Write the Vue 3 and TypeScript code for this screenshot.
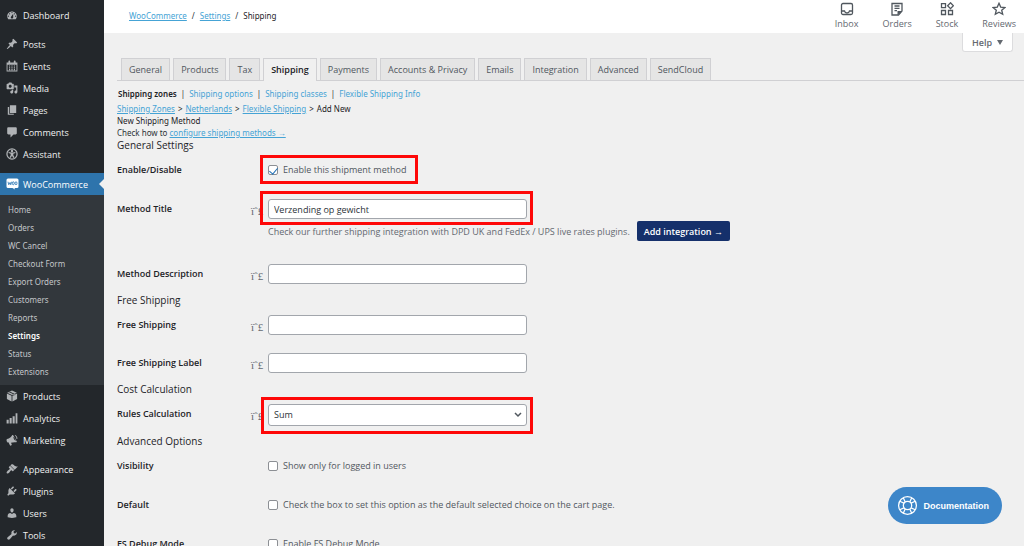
<script setup lang="ts">
import { ref } from 'vue'

interface MenuItem {
  label: string
  icon: string
  gap?: 'small' | 'large'
  current?: boolean
}

const icons: Record<string, string> = {
  dashboard:
    'M3.76 17h12.48c1.1-1.37 1.76-3.11 1.76-5 0-4.42-3.58-8-8-8s-8 3.58-8 8c0 1.89.66 3.63 1.76 5zM10 5c.55 0 1 .45 1 1s-.45 1-1 1-1-.45-1-1 .45-1 1-1zM6 7c.55 0 1 .45 1 1s-.45 1-1 1-1-.45-1-1 .45-1 1-1zm8 0c.55 0 1 .45 1 1s-.45 1-1 1-1-.45-1-1 .45-1 1-1zm-5.37 5.55L12 8v6c0 1.1-.9 2-2 2s-2-.9-2-2c0-.57.24-1.08.63-1.45zM4 11c.55 0 1 .45 1 1s-.45 1-1 1-1-.45-1-1 .45-1 1-1zm12 0c.55 0 1 .45 1 1s-.45 1-1 1-1-.45-1-1 .45-1 1-1z',
  pin: 'M10.44 3.02l1.82-1.82 6.36 6.35-1.83 1.82c-1.05-.68-2.48-.57-3.41.36l-.75.75c-.92.93-1.04 2.35-.35 3.41l-1.83 1.82-2.41-2.41-2.8 2.79c-.42.42-3.38 2.71-3.8 2.29s1.86-3.39 2.28-3.81l2.79-2.79L4.1 9.36l1.83-1.82c1.05.69 2.48.57 3.4-.36l.75-.75c.93-.92 1.05-2.35.36-3.41z',
  calendar:
    'M1 4h3V2.500a1.500 1.500 0 0 1 3 0V4h6V2.500a1.500 1.500 0 0 1 3 0V4h3v15H1zM2.500 8v9.500h15V8zM5 9h2v2H5zm4 0h2v2H9zm4 0h2v2h-2zM5 12h2v2H5zm4 0h2v2H9zm4 0h2v2h-2zM5 15h2v2H5zm4 0h2v2H9zm4 0h2v2h-2z',
  media:
    'M13 11V4c0-.55-.45-1-1-1h-1.67L9 1H5L3.67 3H2c-.55 0-1 .45-1 1v7c0 .55.45 1 1 1h10c.55 0 1-.45 1-1zM7 4.500c1.380 0 2.500 1.120 2.500 2.500S8.380 9.500 7 9.500 4.500 8.380 4.500 7 5.620 4.500 7 4.500zM14 6h5v10.500c0 1.380-1.120 2.500-2.500 2.500S14 17.880 14 16.500s1.120-2.500 2.500-2.500c.17 0 .34.02.5.05V9h-3V6zm-4 8.050V13h2v3.500c0 1.380-1.120 2.500-2.500 2.500S7 17.880 7 16.500 8.120 14 9.500 14c.17 0 .34.02.5.05z',
  pages: 'M6.500 15V2H17v13zM5.300 16.200H13V18H3V5h2.300z',
  comment: 'M4 2h12c1.100 0 2 .9 2 2v8c0 1.100-.9 2-2 2h-3.500l-5 5v-5H4c-1.100 0-2-.9-2-2V4c0-1.100.9-2 2-2z',
  access:
    'M10 .5a9.500 9.500 0 1 0 0 19A9.500 9.500 0 0 0 10 .5zm0 2.100a7.400 7.400 0 1 1 0 14.800 7.400 7.400 0 0 1 0-14.800zM10 3a2 2 0 1 0 0 4 2 2 0 0 0 0-4zM4.500 6.500l-.3 2 3.600 1v2.500L5.900 15.600l2 1L10 13l2.100 3.600 2-1L12.200 12V9.500l3.600-1-.3-2-4 1h-3z',
  box: 'M10 1l8 3.500-8 3.800-8-3.800zM1.500 6l7.800 3.700V19L1.500 15zM18.500 6l-7.800 3.700V19l7.800-4zM6 2.500l8 3.800v2.500l-1.500.7V7L4.500 3.300z',
  chart: 'M1 13h3.500v6H1zM6 10h3.500v9H6zM11 7h3.500v12H11zM16 2h3v17h-3z',
  megaphone:
    'M1.500 8.500C4 8 8 6 10 2.500c.6-.8 1.600-1 2.200-.2l5.600 9.600c.4 1-.1 1.900-1.200 1.900-3.600-.2-6.400.1-8.200.9l1.400 3.600-2.800 1.200L4 13.800l-1.500.2C.8 12.500.5 10 1.500 8.500zM12 4.500a12 12 0 0 0 4 7.500c0-3-1.500-6-4-7.500zM15 1.500c3 1 4.500 4 3.800 7l-1.300-.3c.3-2.400-.7-4.400-2.800-5.400z',
  brush:
    'M14.480 11.060L7.410 3.990l1.500-1.500c.5-.56 2.300-.47 3.510.32 1.210.8 1.430 1.280 2.910 2.100 1.180.64 2.450 1.260 4.450.85zm-.71.71L6.700 4.700 4.930 6.470c-.39.39-.39 1.020 0 1.410l1.060 1.060c.39.39.39 1.030 0 1.420-.6.6-1.430 1.110-2.210 1.690-.35.26-.7.53-1.010.84C1.430 14.230.4 16.080 1.400 17.070c.99 1 2.840-.03 4.180-1.360.31-.31.58-.66.85-1.020.57-.78 1.080-1.610 1.690-2.210.39-.39 1.020-.39 1.410 0l1.060 1.060c.39.39 1.020.39 1.410 0z',
  plug: 'M13.110 4.360L9.870 7.600 8 5.730l3.240-3.240c.35-.34 1.050-.2 1.560.32.52.51.66 1.210.31 1.550zm-8 1.770l.91-1.120 9.010 9.010-1.190.84c-.71.71-2.630 1.160-3.820 1.160H6.140L4.900 17.260c-.59.59-1.540.59-2.120 0-.59-.58-.59-1.530 0-2.120l1.240-1.240v-3.880c0-1.130.4-3.190 1.090-3.890zm7.260 3.970l3.240-3.240c.34-.35 1.040-.21 1.550.31.52.51.66 1.210.31 1.550l-3.240 3.250z',
  user: 'M10 9.250c-2.270 0-2.730-3.440-2.730-3.440C7 4.020 7.820 2 9.970 2c2.160 0 2.980 2.020 2.710 3.810 0 0-.41 3.440-2.680 3.440zm0 2.570L12.720 10c2.390 0 4.520 2.330 4.520 4.530v2.490s-3.650 1.130-7.240 1.130c-3.650 0-7.240-1.130-7.240-1.130v-2.490c0-2.250 1.940-4.480 4.470-4.480z',
  wrench:
    'M16.680 9.770c-1.340 1.340-3.300 1.670-4.950.99l-5.410 6.520c-.99.99-2.590.99-3.580 0s-.99-2.590 0-3.570l6.520-5.420c-.68-1.650-.35-3.610.99-4.950 1.280-1.280 3.120-1.620 4.720-1.060l-2.890 2.890 2.820 2.820 2.860-2.870c.53 1.580.18 3.390-1.080 4.650z',
}

const mainMenu: MenuItem[] = [
  { label: 'Dashboard', icon: 'dashboard' },
  { label: 'Posts', icon: 'pin', gap: 'small' },
  { label: 'Events', icon: 'calendar' },
  { label: 'Media', icon: 'media' },
  { label: 'Pages', icon: 'pages' },
  { label: 'Comments', icon: 'comment' },
  { label: 'Assistant', icon: 'access' },
  { label: 'WooCommerce', icon: 'woo', gap: 'large', current: true },
]
const subMenu = ['Home', 'Orders', 'WC Cancel', 'Checkout Form', 'Export Orders', 'Customers', 'Reports', 'Settings', 'Status', 'Extensions']
const lowerMenu: MenuItem[] = [
  { label: 'Products', icon: 'box' },
  { label: 'Analytics', icon: 'chart' },
  { label: 'Marketing', icon: 'megaphone' },
  { label: 'Appearance', icon: 'brush', gap: 'small' },
  { label: 'Plugins', icon: 'plug' },
  { label: 'Users', icon: 'user' },
  { label: 'Tools', icon: 'wrench' },
]

const tabs = ['General', 'Products', 'Tax', 'Shipping', 'Payments', 'Accounts & Privacy', 'Emails', 'Integration', 'Advanced', 'SendCloud']
const sections = ['Shipping zones', 'Shipping options', 'Shipping classes', 'Flexible Shipping Info']
const tipGlyph = 'ïˆ£'

const enabled = ref(true)
const title = ref('Verzending op gewicht')
const description = ref('')
const freeShipping = ref('')
const freeLabel = ref('')
const rules = ref('Sum')
const visibility = ref(false)
const isDefault = ref(false)
const debug = ref(false)
</script>

<template>
  <div class="admin">
    <nav class="sidebar" aria-label="Main menu">
      <a v-for="item in mainMenu" :key="item.label" href="#" class="item" :class="[item.gap, { current: item.current }]">
        <svg v-if="item.icon === 'woo'" class="woo" viewBox="0 0 26 24" aria-hidden="true">
          <path fill="#fff" d="M4 1h18q3 0 3 3v13q0 3-3 3h-5l1 3-5-3H4q-3 0-3-3V4q0-3 3-3z" />
          <path fill="none" stroke="#2271b1" stroke-width="1.600" d="M4 7.500l1.500 6L8 9l1.500 4.500L11 7.500" />
          <ellipse cx="14.500" cy="10.500" rx="2" ry="3" fill="none" stroke="#2271b1" stroke-width="1.600" />
          <ellipse cx="20" cy="10.500" rx="2" ry="3" fill="none" stroke="#2271b1" stroke-width="1.600" />
        </svg>
        <svg v-else class="icon" viewBox="0 0 20 20" aria-hidden="true"><path fill-rule="evenodd" :d="icons[item.icon]" /></svg>
        <span>{{ item.label }}</span>
      </a>
      <div class="submenu">
        <a v-for="name in subMenu" :key="name" href="#" :class="{ active: name === 'Settings' }">{{ name }}</a>
      </div>
      <a v-for="item in lowerMenu" :key="item.label" href="#" class="item" :class="item.gap">
        <svg class="icon" viewBox="0 0 20 20" aria-hidden="true"><path fill-rule="evenodd" :d="icons[item.icon]" /></svg>
        <span>{{ item.label }}</span>
      </a>
    </nav>

    <div class="page">
      <header class="topbar">
        <div class="crumbs">
          <a href="#">WooCommerce</a><span>/</span><a href="#">Settings</a><span>/</span><b>Shipping</b>
        </div>
        <div class="activity">
          <button type="button">
            <svg viewBox="0 0 14 14" aria-hidden="true"><rect x="1.500" y="1.500" width="11" height="11" rx="1.500" /><path d="M1.500 9h3q.5 2 2.500 2t2.500-2h3" /></svg>
            Inbox
          </button>
          <button type="button">
            <svg viewBox="0 0 14 14" aria-hidden="true"><path d="M2 1.500h10v7.500l-3.500 4H2zM4.500 4h5M4.500 6.300h5M4.500 8.600h2.500" /><path class="solid" d="M7.500 13V9H12z" /></svg>
            Orders
          </button>
          <button type="button">
            <svg viewBox="0 0 14 14" aria-hidden="true"><path d="M1.500 1.700h4v4h-4zM1.500 8.500h4v4h-4zM8.500 8.500h4v4h-4zM10.500.8l2.900 2.900-2.900 2.900-2.900-2.900z" /></svg>
            Stock
          </button>
          <button type="button">
            <svg viewBox="0 0 14 14" aria-hidden="true"><path d="M7 1.300l1.700 3.800 4.200.4-3.200 2.700 1 4.100L7 10.200l-3.700 2.100 1-4.100L1.100 5.500l4.200-.4z" /></svg>
            Reviews
          </button>
        </div>
      </header>

      <div class="meta">
        <button type="button" class="help">Help <svg viewBox="0 0 6 5" aria-hidden="true"><path d="M0 0h6L3 5z" /></svg></button>
      </div>

      <main class="content">
        <nav class="tabs" aria-label="Settings tabs">
          <a v-for="tab in tabs" :key="tab" href="#" :class="{ active: tab === 'Shipping' }">{{ tab }}</a>
        </nav>

        <nav class="sections" aria-label="Shipping sections">
          <template v-for="(name, i) in sections" :key="name">
            <span v-if="i > 0">|</span><a href="#" :class="{ active: i === 0 }">{{ name }}</a>
          </template>
        </nav>

        <div class="trail">
          <a href="#">Shipping Zones</a><span>&gt;</span><a href="#">Netherlands</a><span>&gt;</span><a href="#">Flexible Shipping</a><span>&gt;</span><span>Add New</span>
        </div>
        <h1>New Shipping Method</h1>
        <p class="hint">Check how to <a href="#">configure shipping methods →</a></p>

        <form @submit.prevent>
          <h2>General Settings</h2>
          <div class="row">
            <label class="name" for="enabled">Enable/Disable</label>
            <div class="field">
              <label class="check marked"><input id="enabled" v-model="enabled" type="checkbox" />Enable this shipment method</label>
            </div>
          </div>
          <div class="row text">
            <label class="name" for="title">Method Title</label>
            <span class="tip">{{ tipGlyph }}</span>
            <div class="field">
              <div class="marked box"><input id="title" v-model="title" type="text" /></div>
              <p class="note">Check our further shipping integration with DPD UK and FedEx / UPS live rates plugins. <button type="button">Add integration →</button></p>
            </div>
          </div>
          <div class="row text">
            <label class="name" for="description">Method Description</label>
            <span class="tip">{{ tipGlyph }}</span>
            <div class="field"><div class="box"><input id="description" v-model="description" type="text" /></div></div>
          </div>

          <h2>Free Shipping</h2>
          <div class="row text">
            <label class="name" for="free">Free Shipping</label>
            <span class="tip">{{ tipGlyph }}</span>
            <div class="field"><div class="box"><input id="free" v-model="freeShipping" type="text" /></div></div>
          </div>
          <div class="row text">
            <label class="name" for="free-label">Free Shipping Label</label>
            <span class="tip">{{ tipGlyph }}</span>
            <div class="field"><div class="box"><input id="free-label" v-model="freeLabel" type="text" /></div></div>
          </div>

          <h2>Cost Calculation</h2>
          <div class="row">
            <label class="name" for="rules">Rules Calculation</label>
            <span class="tip">{{ tipGlyph }}</span>
            <div class="field">
              <div class="marked box dropdown">
                <select id="rules" v-model="rules"><option>Sum</option></select>
                <svg class="chevron" viewBox="0 0 8 6" aria-hidden="true"><path d="M1 1l3 3 3-3" /></svg>
              </div>
            </div>
          </div>

          <h2>Advanced Options</h2>
          <div class="row">
            <label class="name" for="visibility">Visibility</label>
            <div class="field"><label class="check"><input id="visibility" v-model="visibility" type="checkbox" />Show only for logged in users</label></div>
          </div>
          <div class="row">
            <label class="name" for="default">Default</label>
            <div class="field"><label class="check"><input id="default" v-model="isDefault" type="checkbox" />Check the box to set this option as the default selected choice on the cart page.</label></div>
          </div>
          <div class="row">
            <label class="name" for="debug">FS Debug Mode</label>
            <div class="field"><label class="check"><input id="debug" v-model="debug" type="checkbox" />Enable FS Debug Mode</label></div>
          </div>
        </form>
      </main>
    </div>

    <button type="button" class="docs">
      <svg viewBox="0 0 20 20" aria-hidden="true">
        <circle cx="10" cy="10" r="8.500" />
        <circle cx="10" cy="10" r="4" />
        <path d="M2.600 6l4 1.800M6 2.600l1.800 4M14 2.600l-1.800 4M17.400 6l-4 1.800M17.400 14l-4-1.800M14 17.400l-1.800-4M6 17.400l1.800-4M2.600 14l4-1.800" />
      </svg>
      Documentation
    </button>
  </div>
</template>

<style>
body {
  margin: 0;
  background: #f0f0f0;
}
</style>

<style scoped>
.admin {
  display: flex;
  height: 100vh;
  overflow: hidden;
  font-family: 'Open Sans', 'Noto Sans', sans-serif;
  font-size: 9px;
  line-height: 13px;
  color: #2c3338;
  background: #f0f0f0;
}
.admin * {
  box-sizing: border-box;
}
button,
input,
select {
  font: inherit;
  color: inherit;
  margin: 0;
}
a {
  color: #45a3d5;
}

.sidebar {
  flex: none;
  width: 104px;
  padding-top: 4px;
  background: #23272b;
}
.item {
  position: relative;
  display: flex;
  align-items: center;
  gap: 5px;
  height: 22px;
  padding-left: 6px;
  color: #f0f0f1;
  font-weight: 500;
  text-decoration: none;
}
.item.small {
  margin-top: 7px;
}
.item.large {
  margin-top: 8px;
}
.item.current {
  background: #2e74ac;
  color: #fff;
}
.item.current::after {
  content: '';
  position: absolute;
  right: 0;
  top: 6px;
  border: 5px solid transparent;
  border-left-width: 0;
  border-right-color: #f0f0f0;
}
.icon {
  width: 12px;
  height: 12px;
  fill: #b0b3b6;
}
.woo {
  width: 13px;
  height: 12px;
  margin-right: -1px;
}
.submenu {
  display: flex;
  flex-direction: column;
  padding: 6px 0 4px;
  background: #32373c;
}
.submenu a {
  height: 18px;
  padding-left: 8px;
  font: 8px/18px 'Noto Sans', sans-serif;
  color: #c3c6c9;
  text-decoration: none;
}
.submenu a.active {
  color: #fff;
  font-weight: 600;
}

.page {
  flex: 1;
  min-width: 0;
}
.topbar {
  display: flex;
  justify-content: space-between;
  height: 33px;
  padding: 0 8px 0 25px;
  background: #fff;
}
.crumbs {
  display: flex;
  align-items: center;
  gap: 5px;
  padding-bottom: 2px;
  font-family: 'Noto Sans', sans-serif;
  font-size: 8px;
}
.crumbs b {
  font-weight: 400;
  color: #1d2327;
}
.activity {
  display: flex;
  gap: 24px;
}
.activity button {
  display: flex;
  flex-direction: column;
  align-items: center;
  gap: 1px;
  padding: 2px 0 0;
  border: 0;
  background: none;
  color: #646970;
}
.activity svg {
  width: 14px;
  height: 14px;
  fill: none;
  stroke: #50575e;
  stroke-width: 1.3;
}
.activity .solid {
  fill: #50575e;
  stroke: none;
}
.meta {
  display: flex;
  justify-content: flex-end;
  align-items: flex-start;
  height: 25px;
  padding-right: 11px;
}
.help {
  display: flex;
  align-items: center;
  gap: 5px;
  height: 19px;
  padding: 0 9px;
  border: 1px solid #dcdcde;
  border-top: 0;
  border-radius: 0 0 3px 3px;
  background: #fff;
  color: #646970;
  font-weight: 600;
}
.help svg {
  width: 6px;
  height: 5px;
  fill: #646970;
}

.content {
  padding-left: 13px;
}
.tabs {
  display: flex;
  gap: 3px;
  padding-left: 4px;
  border-bottom: 1px solid #d0d0d3;
}
.tabs a {
  height: 22px;
  padding: 0 7px;
  border: 1px solid #d0d0d3;
  border-bottom: 0;
  background: #e5e5e5;
  color: #50575e;
  line-height: 22px;
  font-weight: 500;
  text-decoration: none;
  white-space: nowrap;
}
.tabs a.active {
  height: 23px;
  margin-bottom: -1px;
  background: #f0f0f0;
  color: #1d2327;
  font-weight: 600;
}
.sections,
.trail,
.hint,
h1 {
  font-family: 'Noto Sans', sans-serif;
  font-size: 8px;
}
.sections {
  display: flex;
  gap: 4px;
  padding: 6px 0 2px 1px;
}
.sections a {
  text-decoration: none;
}
.sections a.active {
  color: #1d2327;
  font-weight: 600;
}
.trail {
  display: flex;
  gap: 3px;
  color: #1d2327;
}
h1,
h2,
p {
  margin: 0;
  font-weight: 400;
}
h1 {
  line-height: 12px;
  color: #1d2327;
}
h2 {
  font-size: 10px;
  line-height: 13px;
  color: #1d2327;
}
.hint {
  line-height: 12px;
}

.row {
  display: flex;
  min-height: 39px;
}
.row.text {
  min-height: 38px;
}
.name {
  width: 134px;
  padding-top: 11px;
  font-weight: 550;
  color: #1d2327;
}
.tip {
  width: 17px;
  padding-top: 14px;
  font: 11px 'Liberation Serif', serif;
  color: #646970;
}
.name + .field {
  margin-left: 17px;
}
.field {
  flex: 1;
  padding-top: 8px;
}
.box {
  position: relative;
  width: 259px;
}
.box input,
.box select {
  display: block;
  width: 100%;
  height: 20px;
  padding: 0 5px;
  border: 1px solid #a2a6ac;
  border-radius: 3px;
  background: #fff;
}
.box select {
  height: 22px;
  padding-bottom: 2px;
  appearance: none;
}
.chevron {
  position: absolute;
  right: 5px;
  top: 8px;
  width: 8px;
  height: 6px;
  fill: none;
  stroke: #50575e;
  stroke-width: 1.5;
  pointer-events: none;
}
.marked {
  position: relative;
}
.marked::after {
  content: '';
  position: absolute;
  inset: -8px -6px -6px -8px;
  border: 3px solid #fe0808;
  pointer-events: none;
}
.dropdown::after {
  inset: -7px -6px -8px -7px;
}
.check {
  display: inline-flex;
  align-items: center;
  gap: 5px;
  padding-top: 3px;
  color: #50575e;
}
.check.marked::after {
  inset: -5px -12px -8px -8px;
}
.check input {
  position: relative;
  width: 10px;
  height: 10px;
  appearance: none;
  border: 1px solid #8c8f94;
  border-radius: 2px;
  background: #fff;
}
.check input:checked::before {
  content: '';
  position: absolute;
  left: 2px;
  top: 0;
  width: 4px;
  height: 7px;
  border: solid #1f6fb5;
  border-width: 0 1px 1px 0;
  transform: rotate(40deg);
}
.note {
  display: flex;
  align-items: center;
  gap: 7px;
  padding: 2px 0 15px;
  color: #646970;
}
.note button {
  height: 20px;
  padding: 0 7px;
  border: 0;
  border-radius: 2px;
  background: #15306b;
  color: #fff;
  font-weight: 600;
}

.docs {
  position: fixed;
  right: 22px;
  bottom: 22px;
  display: flex;
  align-items: center;
  gap: 5px;
  height: 37px;
  padding: 0 13px 0 9px;
  border: 0;
  border-radius: 19px;
  background: #3d86c9;
  color: #fff;
  font: 700 9px 'Liberation Sans', sans-serif;
}
.docs svg {
  width: 21px;
  height: 21px;
  fill: none;
  stroke: #fff;
  stroke-width: 1.2;
}
</style>
